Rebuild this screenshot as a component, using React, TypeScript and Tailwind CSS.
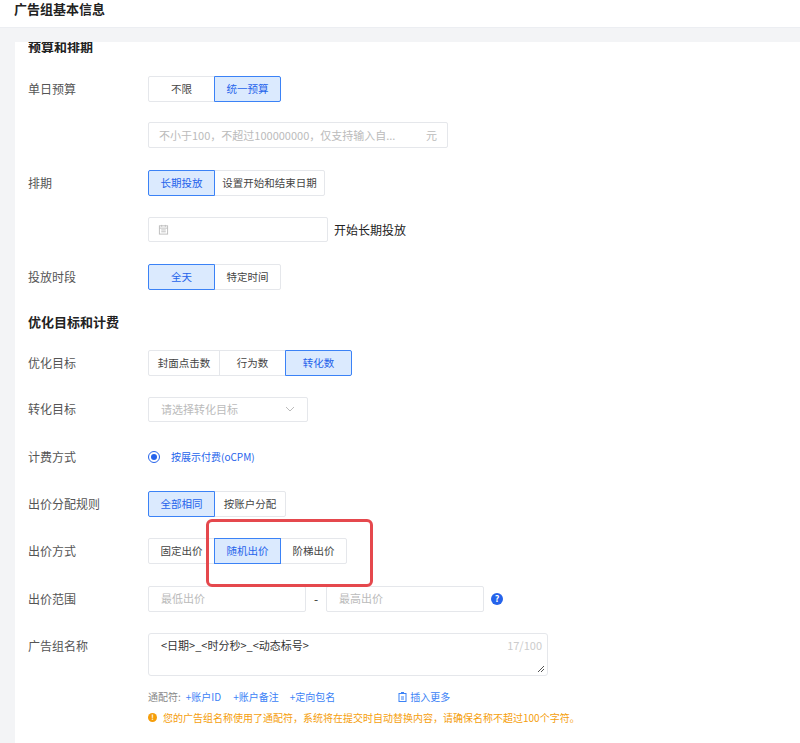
import React from 'react';

const font = { fontFamily: '"Noto Sans CJK SC", "Liberation Sans", sans-serif' };

function Seg({ items, active, widths }: { items: string[]; active: number; widths: number[] }) {
  return (
    <div className="flex h-[26px]">
      {items.map((t, i) => (
        <div
          key={t}
          style={{ width: widths[i] }}
          className={
            'flex items-center justify-center text-[10.5px] border ' +
            (i > 0 ? '-ml-px ' : '') +
            (i === 0 ? 'rounded-l-[2px] ' : '') +
            (i === items.length - 1 ? 'rounded-r-[2px] ' : '') +
            (i === active
              ? 'relative z-10 border-[#3b82f6] bg-[#dbeafe] text-[#2563eb]'
              : 'border-[#e5e7eb] bg-white text-[#444]')
          }
        >
          {t}
        </div>
      ))}
    </div>
  );
}

function Row({ label, children, mt }: { label?: string; children: React.ReactNode; mt: string }) {
  return (
    <div className={'flex items-center ' + mt}>
      <div className="w-[120px] text-[12px] text-[#555]">{label}</div>
      {children}
    </div>
  );
}

export default function App() {
  return (
    <div style={font} className="w-[800px] h-[743px] bg-[#f3f4f6] overflow-hidden">
      <div className="h-[28px] bg-white border-b border-[#eceef2] pl-[14px] text-[13px] font-bold text-[#222] leading-[18px]">
        广告组基本信息
      </div>
      <div className="ml-[15px] mt-[14px] bg-white h-[720px] pl-[13px] relative">
        <div className="text-[13px] font-bold text-[#222] leading-[10px] h-[11px] overflow-hidden">预算和排期</div>
        <Row label="单日预算" mt="mt-[23px]">
          <Seg items={['不限', '统一预算']} active={1} widths={[67, 67]} />
        </Row>
        <Row mt="mt-[20px]">
          <div className="w-[300px] h-[26px] border border-[#e5e7eb] rounded-[2px] flex items-center justify-between px-[10px] text-[11px] text-[#bbb]">
            <span>不小于100，不超过100000000，仅支持输入自...</span>
            <span>元</span>
          </div>
        </Row>
        <Row label="排期" mt="mt-[22px]">
          <Seg items={['长期投放', '设置开始和结束日期']} active={0} widths={[67, 111]} />
        </Row>
        <Row mt="mt-[21px]">
          <div className="w-[180px] h-[25px] border border-[#e5e7eb] rounded-[2px] flex items-center px-[9px]">
            <svg width="11" height="11" viewBox="0 0 12 12" fill="none" stroke="#bbb" strokeWidth="1">
              <rect x="1.5" y="2" width="9" height="9" />
              <path d="M1.5 4.5h9M4 1v2M8 1v2M3.5 6.5h5M3.5 8.5h5" />
            </svg>
          </div>
          <span className="ml-[6px] text-[12px] text-[#222]">开始长期投放</span>
        </Row>
        <Row label="投放时段" mt="mt-[22px]">
          <Seg items={['全天', '特定时间']} active={0} widths={[67, 67]} />
        </Row>
        <div className="mt-[22px] text-[13px] font-bold text-[#222]">优化目标和计费</div>
        <Row label="优化目标" mt="mt-[18px]">
          <Seg items={['封面点击数', '行为数', '转化数']} active={2} widths={[72, 67, 67]} />
        </Row>
        <Row label="转化目标" mt="mt-[21px]">
          <div className="w-[160px] h-[25px] border border-[#e5e7eb] rounded-[2px] flex items-center justify-between px-[12px] text-[11px] text-[#bbb]">
            <span>请选择转化目标</span>
            <svg width="10" height="6" viewBox="0 0 10 6" fill="none" stroke="#bbb"><path d="M1 1l4 4 4-4" /></svg>
          </div>
        </Row>
        <Row label="计费方式" mt="mt-[22px]">
          <div className="flex items-center h-[26px]">
            <span className="w-[12px] h-[12px] rounded-full border border-[#2563eb] flex items-center justify-center">
              <span className="w-[6px] h-[6px] rounded-full bg-[#2563eb]" />
            </span>
            <span className="ml-[11px] text-[10px] text-[#2563eb]">按展示付费(oCPM)</span>
          </div>
        </Row>
        <Row label="出价分配规则" mt="mt-[21px]">
          <Seg items={['全部相同', '按账户分配']} active={0} widths={[67, 72]} />
        </Row>
        <Row label="出价方式" mt="mt-[21px]">
          <Seg items={['固定出价', '随机出价', '阶梯出价']} active={1} widths={[67, 67, 67]} />
        </Row>
        <Row label="出价范围" mt="mt-[22px]">
          <div className="w-[158px] h-[26px] border border-[#e5e7eb] rounded-[2px] flex items-center px-[12px] text-[11px] text-[#bbb]">最低出价</div>
          <span className="w-[20px] text-center text-[12px] text-[#333]">-</span>
          <div className="w-[158px] h-[26px] border border-[#e5e7eb] rounded-[2px] flex items-center px-[12px] text-[11px] text-[#bbb]">最高出价</div>
          <span className="ml-[7px] w-[12px] h-[12px] rounded-full bg-[#2563eb] text-white text-[9px] font-bold flex items-center justify-center">?</span>
        </Row>
        <div className="flex mt-[21px]">
          <div className="w-[120px] text-[12px] text-[#555] pt-[4px]">广告组名称</div>
          <div className="relative w-[400px] h-[43px] border border-[#e5e7eb] rounded-[3px] px-[12px] pt-[3px] text-[11px] text-[#333]">
            &lt;日期&gt;_&lt;时分秒&gt;_&lt;动态标号&gt;
            <span className="absolute right-[5px] top-[3px] text-[11px] text-[#ccc]">17/100</span>
            <svg className="absolute right-[2px] bottom-[2px]" width="8" height="8" viewBox="0 0 8 8" stroke="#555"><path d="M1 7L7 1M4 7L7 4" /></svg>
          </div>
        </div>
        <div className="ml-[120px] mt-[13px] flex items-center text-[10px] h-[16px]">
          <span className="text-[#888]">通配符:</span>
          <span className="ml-[5px] text-[#3b82f6]">+账户ID</span>
          <span className="ml-[12px] text-[#3b82f6]">+账户备注</span>
          <span className="ml-[11px] text-[#3b82f6]">+定向包名</span>
          <span className="ml-[63px] text-[#3b82f6] flex items-center gap-[3px]">
            <svg width="9" height="10" viewBox="0 0 9 10" fill="none" stroke="#3b82f6"><rect x="1" y="1.5" width="7" height="8" /><path d="M3 0.5h3M3 5h3M3 7h3" /></svg>
            插入更多
          </span>
        </div>
        <div className="ml-[120px] mt-[5px] flex items-center text-[10px] text-[#f59e0b]">
          <span className="w-[9px] h-[9px] rounded-full bg-[#f59e0b] text-white text-[7px] font-bold flex items-center justify-center">!</span>
          <span className="ml-[6px]">您的广告组名称使用了通配符，系统将在提交时自动替换内容，请确保名称不超过100个字符。</span>
        </div>
        <div className="absolute left-[191px] top-[477px] w-[167px] h-[68px] border-[3px] border-[#e5484d] rounded-[6px]" />
      </div>
    </div>
  );
}
